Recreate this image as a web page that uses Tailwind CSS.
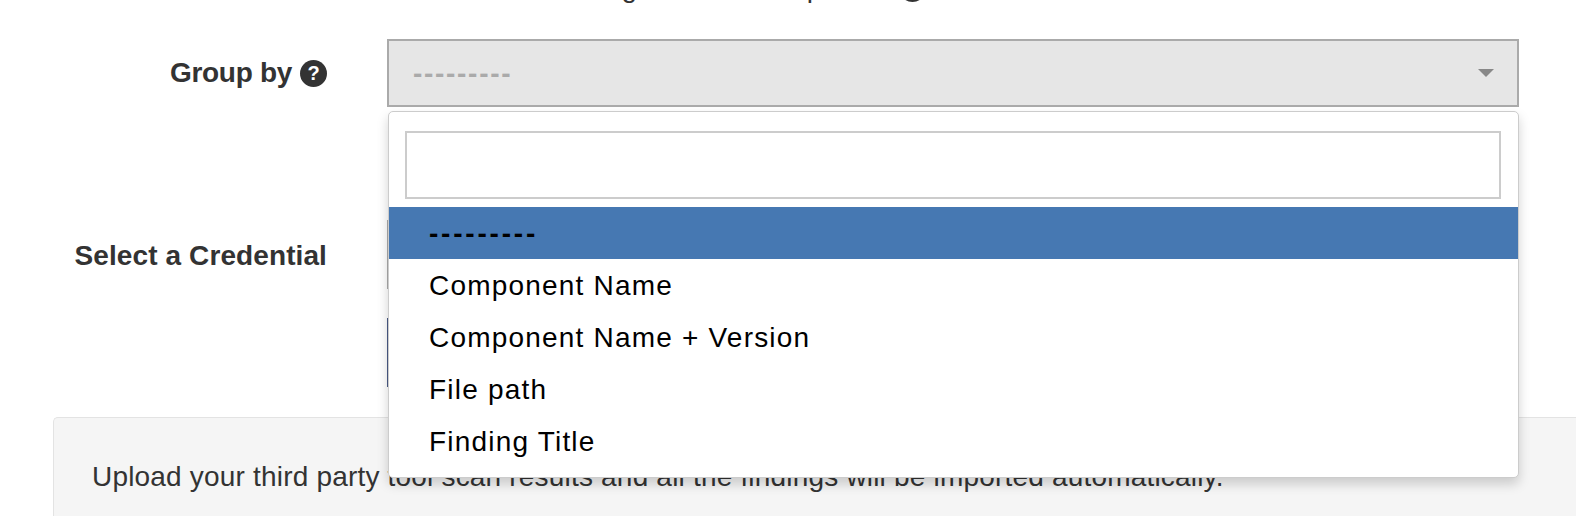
<!DOCTYPE html>
<html lang="en">
<head>
  <meta charset="UTF-8" />
  <title>Import Scan Results</title>
  <script src="https://cdn.jsdelivr.net/npm/@tailwindcss/browser@4"></script>
</head>
<body class="bg-white h-[516px] overflow-hidden relative font-['Liberation_Sans',Arial,sans-serif] text-[#333]">
  <!-- Help text cut off by the top of the shot -->
  <div class="h-[39px] overflow-hidden relative">
    <div class="absolute left-[592px] bottom-[35px] text-[28px] leading-[32px] whitespace-nowrap">Tag this whole import</div>
    <span class="absolute left-[899px] -top-[25px] w-[27px] h-[27px] rounded-full bg-[#333]"></span>
  </div>

  <!-- Group by -->
  <div class="grid grid-cols-[327px_1132px] gap-x-[60px]">
    <label class="flex items-center justify-end gap-[8px] text-[28px] font-bold tracking-[-0.3px] h-[68px]">
      Group by
      <span class="w-[27px] h-[27px] rounded-full bg-[#333] text-white text-[20px] font-bold flex items-center justify-center">?</span>
    </label>
    <div class="h-[68px] border-2 border-[#aaa] bg-[#e6e6e6] flex items-center justify-between pl-[24px] pr-[23px]">
      <span class="text-[28px] font-bold text-[#aaa] tracking-[1.7px] pt-[2px]">---------</span>
      <span class="w-0 h-0 border-x-[8px] border-x-transparent border-t-[8px] border-t-[#888]"></span>
    </div>
  </div>

  <!-- Select a Credential -->
  <div class="grid grid-cols-[327px_1132px] gap-x-[60px] mt-[113px]">
    <label class="flex items-center justify-end text-[28px] font-bold tracking-[0.1px] pt-[2px] h-[69px]">Select a Credential</label>
    <div class="h-[69px] border-2 border-[#aaa] bg-white"></div>
  </div>

  <!-- Submit -->
  <div class="grid grid-cols-[327px_1132px] gap-x-[60px] mt-[29px]">
    <div></div>
    <div class="w-[240px] h-[69px] bg-[#4a5a85]"></div>
  </div>

  <!-- Info well -->
  <div class="ml-[53px] mt-[30px] h-[99px] bg-[#f5f5f5] border-t border-l border-[#e3e3e3] rounded-tl-[5px] pl-[38px] pt-[44px] text-[28px] tracking-[0.19px] leading-[30px] whitespace-nowrap">
    Upload your third party tool scan results and all the findings will be imported automatically.
  </div>

  <!-- Open select2 dropdown -->
  <div class="absolute left-[388px] top-[111px] w-[1131px] h-[367px] bg-white border border-[#ccc] rounded-[5px] shadow-[0_6px_12px_rgba(0,0,0,0.175)] overflow-hidden">
    <div class="pl-[16px] pr-[17px] pt-[19px] pb-[8px]">
      <input type="text" class="block w-full h-[68px] border-2 border-[#ccc] bg-white" />
    </div>
    <ul class="text-[28px] text-black tracking-[1.2px] leading-[54px]">
      <li class="h-[52px] bg-[#4678b2] pl-[40px] font-bold tracking-[2.8px]">---------</li>
      <li class="h-[52px] pl-[40px]">Component Name</li>
      <li class="h-[52px] pl-[40px]">Component Name + Version</li>
      <li class="h-[52px] pl-[40px]">File path</li>
      <li class="h-[52px] pl-[40px]">Finding Title</li>
    </ul>
  </div>
</body>
</html>
